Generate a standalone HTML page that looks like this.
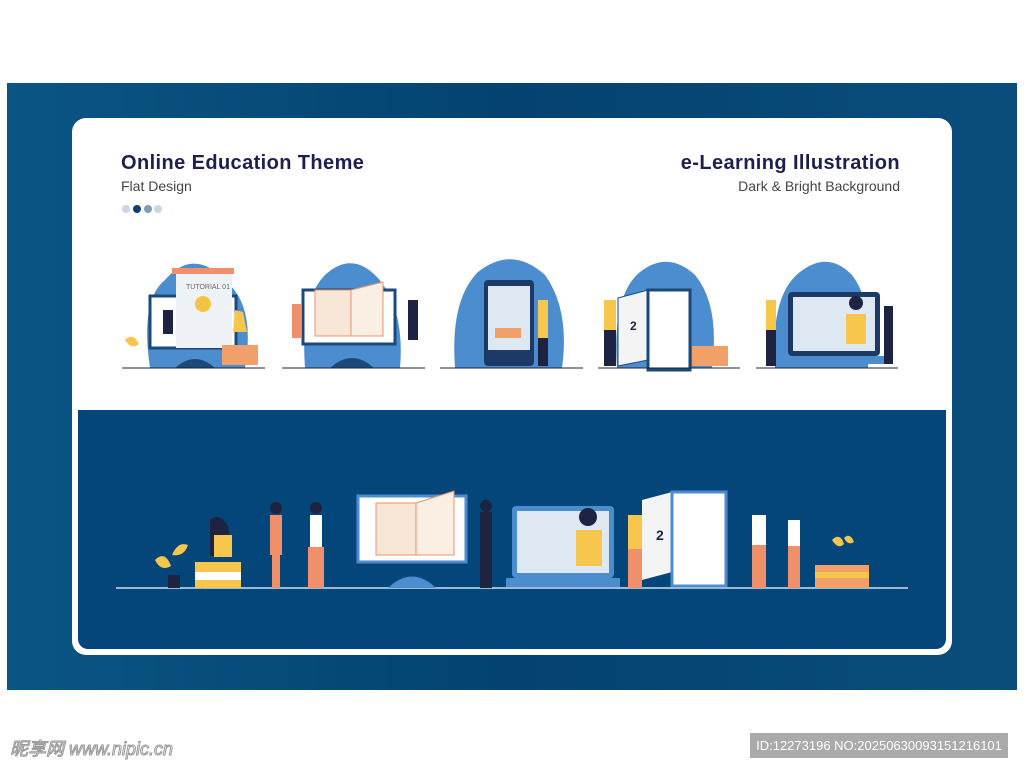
<!DOCTYPE html>
<html><head><meta charset="utf-8"><style>
html,body{margin:0;padding:0;background:#fff;width:1024px;height:774px;overflow:hidden;font-family:"Liberation Sans",sans-serif}
.band{position:absolute;left:7px;top:83px;width:1010px;height:607px;background:linear-gradient(90deg,#0a5584,#034271 50%,#0a4d7c)}
.card{position:absolute;left:72px;top:118px;width:880px;height:537px;background:#fff;border-radius:14px}
.dark{position:absolute;left:78px;top:410px;width:868px;height:239px;background:#05467a;border-radius:0 0 10px 10px}
.t{position:absolute;font-weight:bold;color:#1d1f4f;font-size:20px;letter-spacing:0.4px}
.s{position:absolute;color:#444;font-size:14px}
.wm{position:absolute;left:10px;top:735px;color:#fff;font-size:18px;font-style:italic;-webkit-text-stroke:1px #999;font-family:"Liberation Sans","Noto Sans CJK SC",sans-serif}
.id{position:absolute;left:750px;top:733px;width:258px;height:25px;background:#aaa;color:#fff;font-size:13px;line-height:25px;text-align:center}
svg{position:absolute;left:0;top:0}
</style></head><body>
<div class="band"></div>
<div class="card"></div>
<div class="dark"></div>
<div class="t" style="left:121px;top:152px">Online Education Theme</div>
<div class="s" style="left:121px;top:178px">Flat Design</div>
<div class="t" style="right:124px;top:152px">e-Learning Illustration</div>
<div class="s" style="right:124px;top:178px">Dark &amp; Bright Background</div>
<svg width="1024" height="774">
<circle cx="126" cy="209" r="4" fill="#ccd6e0"/><circle cx="137" cy="209" r="4" fill="#0a3f6e"/><circle cx="148" cy="209" r="4" fill="#7f9ab3"/><circle cx="158" cy="209" r="4" fill="#ccd6e0"/>
<g id="top">
<path d="M150 368 Q140 300 165 280 Q195 245 230 285 Q255 310 245 368Z" fill="#4b8dcf"/>
<rect x="150" y="296" width="86" height="52" fill="#fff" stroke="#1b4a7a" stroke-width="3"/>
<rect x="176" y="270" width="56" height="78" fill="#eef1f5"/><rect x="172" y="268" width="62" height="6" fill="#f0906a"/>
<text x="186" y="289" font-size="7" fill="#666">TUTORIAL 01</text>
<circle cx="203" cy="304" r="8" fill="#f5c343"/>
<rect x="163" y="310" width="10" height="24" fill="#1d2340"/>
<path d="M235 310 l8 2 l4 20 h-14z" fill="#f6c64d"/>
<rect x="222" y="345" width="36" height="20" fill="#f1a06a"/>
<path d="M175 368 Q195 350 215 368Z" fill="#1b4a7a"/>
<path d="M125 340 q8 -8 14 4 q-8 6 -14 -4z" fill="#f6c64d"/>
<line x1="122" y1="368" x2="265" y2="368" stroke="#223" stroke-width="1"/>
<path d="M305 368 Q300 300 325 275 Q352 250 378 278 Q405 310 400 368Z" fill="#4b8dcf"/>
<rect x="303" y="290" width="92" height="54" fill="#fff" stroke="#1b4a7a" stroke-width="3"/>
<path d="M315 290 h36 v46 h-36z" fill="#f8e6d6" stroke="#f0906a"/><path d="M351 290 l32 -8 v54 l-32 0z" fill="#fbeee2" stroke="#f0906a"/>
<path d="M330 368 Q352 348 374 368Z" fill="#1b4a7a"/>
<rect x="292" y="304" width="9" height="34" fill="#f0906a"/><rect x="408" y="300" width="10" height="40" fill="#1d2340"/>
<line x1="282" y1="368" x2="425" y2="368" stroke="#223"/>
<path d="M455 368 Q450 300 478 272 Q512 245 545 275 Q570 310 562 368Z" fill="#4b8dcf"/>
<rect x="484" y="280" width="50" height="86" rx="4" fill="#1d3a66"/><rect x="488" y="286" width="42" height="64" fill="#dde8f3"/>
<rect x="495" y="328" width="26" height="10" fill="#f1a06a"/>
<rect x="538" y="300" width="10" height="40" fill="#f6c64d"/><rect x="538" y="338" width="10" height="28" fill="#1d2340"/>
<line x1="440" y1="368" x2="583" y2="368" stroke="#223"/>
<path d="M617 368 Q612 295 640 272 Q668 250 695 275 Q720 305 712 368Z" fill="#4b8dcf"/>
<path d="M618 298 l30 -8 v70 l-30 6z" fill="#f4f4f4" stroke="#1b4a7a"/>
<path d="M648 290 h42 v80 h-42z" fill="#fff" stroke="#1b4a7a" stroke-width="3"/>
<text x="630" y="330" font-size="12" font-weight="bold" fill="#1d2340">2</text>
<rect x="604" y="300" width="12" height="30" fill="#f6c64d"/><rect x="604" y="330" width="12" height="36" fill="#1d2340"/>
<rect x="692" y="346" width="36" height="20" fill="#f1a06a"/>
<line x1="598" y1="368" x2="740" y2="368" stroke="#223"/>
<path d="M775 368 Q770 295 800 272 Q828 250 852 275 Q875 305 868 368Z" fill="#4b8dcf"/>
<rect x="788" y="292" width="92" height="64" rx="4" fill="#1d3a66"/><rect x="793" y="297" width="82" height="54" fill="#dde8f3"/>
<rect x="782" y="356" width="104" height="8" fill="#4b8dcf"/>
<circle cx="856" cy="303" r="7" fill="#1d2340"/><rect x="846" y="314" width="20" height="30" fill="#f6c64d"/>
<rect x="766" y="300" width="10" height="30" fill="#f6c64d"/><rect x="766" y="330" width="10" height="36" fill="#1d2340"/>
<rect x="884" y="306" width="9" height="58" fill="#1d2340"/>
<line x1="756" y1="368" x2="898" y2="368" stroke="#223"/>
</g>
<line x1="116" y1="588" x2="908" y2="588" stroke="#cfe0ee" stroke-width="1.5"/>
<path d="M155 560 q10 -10 16 6 q-10 6 -16 -6z M172 555 q6 -14 16 -10 q-4 12 -16 10z" fill="#f6c64d"/><rect x="168" y="575" width="12" height="13" fill="#1d2340"/>
<rect x="195" y="562" width="46" height="26" fill="#f6c64d"/><rect x="195" y="572" width="46" height="8" fill="#fff"/>
<path d="M210 520 q10 -8 18 6 l4 30 h-22z" fill="#1d2340"/><rect x="214" y="535" width="18" height="22" fill="#f6c64d"/>
<rect x="270" y="515" width="12" height="40" fill="#f0906a"/><rect x="272" y="555" width="8" height="33" fill="#f0906a"/><circle cx="276" cy="508" r="6" fill="#1d2340"/>
<rect x="310" y="515" width="12" height="32" fill="#fff"/><rect x="308" y="547" width="16" height="41" fill="#f0906a"/><circle cx="316" cy="508" r="6" fill="#1d2340"/>
<rect x="358" y="496" width="108" height="66" fill="#fff" stroke="#4b8dcf" stroke-width="3"/>
<path d="M376 503 h40 v52 h-40z" fill="#f8e6d6" stroke="#f0906a"/><path d="M416 503 l38 -12 v64 h-38z" fill="#fbeee2" stroke="#f0906a"/>
<path d="M388 588 Q412 565 436 588Z" fill="#4b8dcf"/>
<rect x="480" y="512" width="12" height="76" fill="#1d2340"/><circle cx="486" cy="506" r="6" fill="#1d2340"/>
<rect x="512" y="506" width="102" height="72" rx="4" fill="#4b8dcf"/><rect x="517" y="511" width="92" height="62" fill="#dde8f3"/>
<rect x="506" y="578" width="114" height="9" fill="#4b8dcf"/>
<circle cx="588" cy="517" r="9" fill="#1d2340"/><rect x="576" y="530" width="26" height="36" fill="#f6c64d"/>
<rect x="628" y="515" width="14" height="34" fill="#f6c64d"/><rect x="628" y="549" width="14" height="39" fill="#f0906a"/>
<path d="M642 500 l30 -8 v80 l-30 8z" fill="#f4f4f4"/><path d="M672 492 h54 v94 h-54z" fill="#fff" stroke="#4b8dcf" stroke-width="3"/>
<text x="656" y="540" font-size="14" font-weight="bold" fill="#1d2340">2</text>
<rect x="752" y="515" width="14" height="30" fill="#fff"/><rect x="752" y="545" width="14" height="43" fill="#f0906a"/>
<rect x="788" y="520" width="12" height="26" fill="#fff"/><rect x="788" y="546" width="12" height="42" fill="#f0906a"/>
<path d="M832 540 q8 -8 12 4 q-6 6 -12 -4z M844 538 q6 -6 10 4 q-6 4 -10 -4z" fill="#f6c64d"/>
<rect x="815" y="565" width="54" height="23" fill="#f1a06a"/><rect x="815" y="572" width="54" height="6" fill="#f6c64d"/>
</svg>
<div class="wm">昵享网 www.nipic.cn</div>
<div class="id">ID:12273196 NO:20250630093151216101</div>
</body></html>
